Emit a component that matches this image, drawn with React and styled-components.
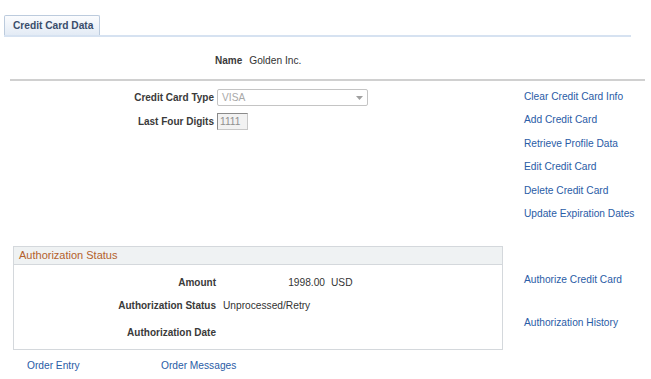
import React from "react";
import styled, { createGlobalStyle } from "styled-components";

const GlobalStyle = createGlobalStyle`
  body {
    margin: 0;
    background: #fff;
    font-family: "Liberation Sans", Arial, sans-serif;
    font-size: 10.2px;
    color: #333;
  }
`;

const topLinks = [
  "Clear Credit Card Info",
  "Add Credit Card",
  "Retrieve Profile Data",
  "Edit Credit Card",
  "Delete Credit Card",
  "Update Expiration Dates",
];

function App() {
  return (
    <StPage>
      <GlobalStyle />
      <StTabStrip>
        <StTab>Credit Card Data</StTab>
      </StTabStrip>

      <StNameRow>
        <StLabel>Name</StLabel>
        <span>Golden Inc.</span>
      </StNameRow>
      <StDivider />

      <StSection>
        <StFormGrid>
          <StLabel>Credit Card Type</StLabel>
          <StSelect>
            VISA
            <svg width="7" height="4" viewBox="0 0 7 4">
              <path d="M0 0h7L3.5 4z" fill="#a0a0a0" />
            </svg>
          </StSelect>
          <StLabel>Last Four Digits</StLabel>
          <StDigits>1111</StDigits>
        </StFormGrid>
        <StLinkList $top={4} $gap={0}>
          {topLinks.map((l) => (
            <StLink key={l} $h={23.4}>
              {l}
            </StLink>
          ))}
        </StLinkList>
      </StSection>

      <StSection $mt={21}>
        <StBox>
          <StBoxHeader>Authorization Status</StBoxHeader>
          <StBoxBody>
            <StRow $h={23}>
              <StLabel>Amount</StLabel>
              <StValue>
                <StAmount>1998.00</StAmount>
                USD
              </StValue>
            </StRow>
            <StRow $h={23}>
              <StLabel>Authorization Status</StLabel>
              <StValue>Unprocessed/Retry</StValue>
            </StRow>
            <StRow $h={31}>
              <StLabel>Authorization Date</StLabel>
              <StValue />
            </StRow>
          </StBoxBody>
        </StBox>
        <StLinkList $top={24} $gap={22.7}>
          <StLink $h={20}>Authorize Credit Card</StLink>
          <StLink $h={20}>Authorization History</StLink>
        </StLinkList>
      </StSection>

      <StFooter>
        <StFooterLink>Order Entry</StFooterLink>
        <StFooterLink>Order Messages</StFooterLink>
      </StFooter>
    </StPage>
  );
}

export default App;

const StPage = styled.div`
  width: 651px;
  height: 379px;
  padding-top: 15px;
  box-sizing: border-box;
  overflow: hidden;
`;

const StTabStrip = styled.div`
  display: flex;
  align-items: flex-end;
  margin-left: 4px;
  width: 627px;
  border-bottom: 2px solid #d6e2f1;
`;

const StTab = styled.div`
  width: 96px;
  height: 20px;
  box-sizing: border-box;
  border: 1px solid #bccbdd;
  border-bottom: none;
  border-radius: 2px 2px 0 0;
  background: linear-gradient(#fbfcfe, #e3ebf5);
  padding-left: 8px;
  line-height: 20px;
  font-weight: 700;
  color: #3a4d6b;
`;

const StNameRow = styled.div`
  display: flex;
  gap: 7px;
  margin-top: 17px;
  padding-left: 215px;
  line-height: 14px;
`;

const StLabel = styled.label`
  font-weight: 700;
  font-size: 10px;
  color: #3a3a3a;
  text-align: right;
  white-space: nowrap;
`;

const StDivider = styled.div`
  margin: 11px 6px 0 10px;
  border-top: 2px solid #d0d0d0;
`;

const StSection = styled.div`
  display: grid;
  grid-template-columns: 524px 1fr;
  margin-top: ${(p) => p.$mt || 0}px;
`;

const StFormGrid = styled.div`
  display: grid;
  grid-template-columns: 214px auto;
  column-gap: 3px;
  row-gap: 7px;
  align-items: center;
  align-content: start;
  justify-items: start;
  padding-top: 8px;

  & > label {
    justify-self: end;
  }
`;

const StSelect = styled.div`
  width: 151px;
  height: 17px;
  box-sizing: border-box;
  display: flex;
  align-items: center;
  justify-content: space-between;
  padding: 0 4px 0 4px;
  border: 1px solid #c4c4c4;
  border-radius: 2px;
  color: #a8a8a8;
`;

const StDigits = styled.div`
  width: 31px;
  height: 17px;
  box-sizing: border-box;
  padding-left: 2px;
  line-height: 15px;
  border: 1px solid #c8c8c8;
  border-top-color: #8a8a8a;
  border-left-color: #8a8a8a;
  background: #f2f2f2;
  color: #909090;
`;

const StLinkList = styled.div`
  display: flex;
  flex-direction: column;
  gap: ${(p) => p.$gap}px;
  padding-top: ${(p) => p.$top}px;
`;

const StLink = styled.a`
  height: ${(p) => p.$h}px;
  line-height: ${(p) => p.$h}px;
  color: #2a5ca6;
  white-space: nowrap;
  cursor: pointer;
`;

const StBox = styled.div`
  margin-left: 13px;
  width: 490px;
  height: 104px;
  box-sizing: border-box;
  border: 1px solid #d4d8dc;
`;

const StBoxHeader = styled.div`
  height: 17px;
  line-height: 17px;
  padding-left: 5px;
  background: #eff2f3;
  border-bottom: 1px solid #d4d8dc;
  color: #b4612c;
  font-size: 11px;
`;

const StBoxBody = styled.div`
  padding-top: 6px;
`;

const StRow = styled.div`
  display: grid;
  grid-template-columns: 202px 1fr;
  column-gap: 7px;
  height: ${(p) => p.$h}px;
  align-items: center;

  & > label {
    justify-self: end;
  }
`;

const StValue = styled.span`
  display: flex;
  gap: 6px;
  color: #333;
`;

const StAmount = styled.span`
  width: 102px;
  text-align: right;
`;

const StFooter = styled.div`
  display: flex;
  margin-top: 9px;
  padding-left: 27px;
  line-height: 14px;
`;

const StFooterLink = styled.a`
  width: 134px;
  color: #2a5ca6;
  cursor: pointer;
`;
